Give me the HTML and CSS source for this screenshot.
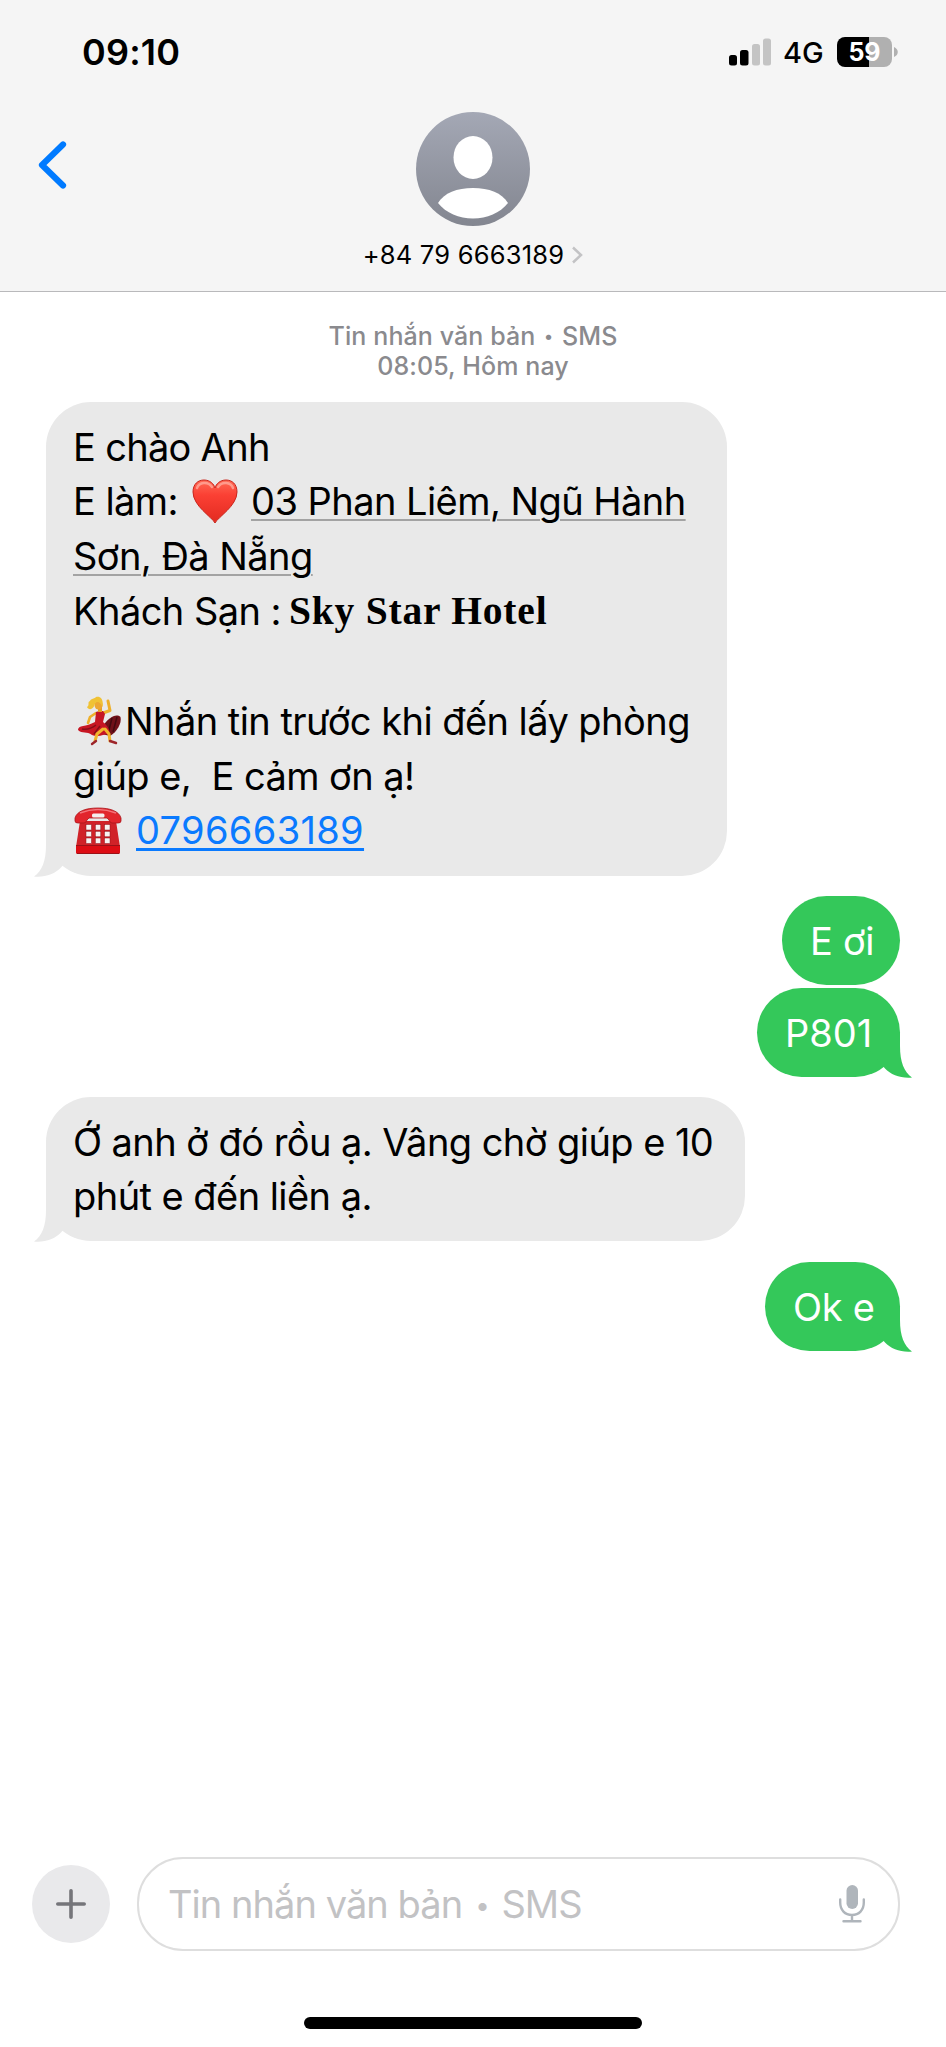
FILE: index.html
```html
<!DOCTYPE html>
<html lang="vi">
<head>
<meta charset="utf-8">
<title>Tin nhắn</title>
<link rel="stylesheet" href="styles.css">
</head>
<body>
<div class="phone">
  <header class="header">
    <div class="status">
      <span class="clock">09:10</span>
      <div class="status-right">
        <svg class="signal" width="42" height="28" viewBox="0 0 42 28"><rect x="0" y="17" width="8" height="10.500" rx="2.500"/><rect x="11" y="12" width="8.500" height="15.500" rx="2.500"/><rect x="23" y="6" width="8" height="21.500" rx="2.500" fill="#c4c4c4"/><rect x="34" y="0.500" width="8" height="27" rx="2.500" fill="#c4c4c4"/></svg>
        <span class="network">4G</span>
        <div class="battery"><span class="battery-level">59</span></div>
        <svg class="battery-nub" width="4" height="10" viewBox="0 0 4 10"><path d="M0 0C5 2 5 8 0 10Z" fill="#b0b0b0"/></svg>
      </div>
    </div>
    <div class="nav">
      <svg class="back" width="30" height="50" viewBox="0 0 30 50"><path d="M26 4.500L5 25L26 45.500" fill="none" stroke="#007aff" stroke-width="6.200" stroke-linecap="round" stroke-linejoin="round"/></svg>
      <div class="contact">
        <svg class="avatar" width="114" height="114" viewBox="0 0 114 114">
          <defs><linearGradient id="ag" x1="0" y1="0" x2="0" y2="1"><stop offset="0" stop-color="#a4a8b5"/><stop offset="1" stop-color="#838690"/></linearGradient></defs>
          <circle cx="57" cy="57" r="57" fill="url(#ag)"/>
          <ellipse cx="57" cy="45.500" rx="19.500" ry="21.500" fill="#fff"/>
          <path d="M22 91C28 81 41 76 57 76C73 76 86 81 92 91C84 101 71 106.500 57 106.500C43 106.500 30 101 22 91Z" fill="#fff"/>
        </svg>
        <div class="number"><span class="number-text">+84 79 6663189</span><svg width="12" height="18" viewBox="0 0 12 18"><path d="M2 1.500L10 9L2 16.500" fill="none" stroke="#c3c3c5" stroke-width="2.500"/></svg></div>
      </div>
    </div>
  </header>

  <main class="thread">
    <div class="stamp"><div>Tin nhắn văn bản <span class="dot">•</span> SMS</div><div>08:05, Hôm nay</div></div>

    <div class="bubble in first">
      <div class="line"><span class="greeting">E chào Anh</span></div>
      <div class="line"><span>E làm:</span><svg class="heart" width="46" height="46" viewBox="0 0 46 46"><defs><linearGradient id="hg" x1="0" y1="0" x2="0" y2="1"><stop offset="0" stop-color="#ff6a55"/><stop offset=".35" stop-color="#fb4034"/><stop offset="1" stop-color="#e22a20"/></linearGradient></defs><path d="M23 44C20 38 1 27 1 13C1 5 6 1 12 1C18 1 22 5 23 9C24 5 28 1 34 1C40 1 45 5 45 13C45 27 26 38 23 44Z" fill="url(#hg)" stroke="#c9251c" stroke-width="1"/><path d="M5 9C7 3 16 2 20 8M26 8C30 2 39 3 41 9" fill="none" stroke="#ffb4a6" stroke-width="2.500" stroke-linecap="round" opacity=".7"/></svg><span class="addr">03 Phan Liêm, Ngũ Hành</span></div>
      <div class="line"><span class="addr">Sơn, Đà Nẵng</span></div>
      <div class="line"><span>Khách Sạn :</span><b class="hotel">Sky Star Hotel</b></div>
      <div class="line"></div>
      <div class="line"><svg class="dancer" width="46" height="50" viewBox="0 0 46 50"><path d="M26 17L33 14.500L31 5" fill="none" stroke="#eeb02b" stroke-width="3" stroke-linecap="round" stroke-linejoin="round"/><path d="M19 17L13 21L11 27" fill="none" stroke="#eeb02b" stroke-width="2.600" stroke-linecap="round"/><path d="M26 30C31 22 39 17 43.500 21C45 27 40 36 33 40L25 38Z" fill="#701018"/><path d="M35 22L31 38M40 21L36 36" stroke="#430a10" stroke-width="1.500"/><path d="M19 16L22 15H26L28 18L26 26C31 30 34 36 32 38C26 38 22 42 15 39C10 35 5 38 1 34C1 29 9 31 18 26Z" fill="#c71623"/><path d="M19 29C14 33 10 34 5 33M23 30L17 38" fill="none" stroke="#850e18" stroke-width="1.500"/><path d="M26 33L20 38L18 45M28 33L32 38L33 45" fill="none" stroke="#f1b62d" stroke-width="3" stroke-linecap="round" stroke-linejoin="round"/><path d="M19 45L15 48M33 45L39 47" stroke="#9d242a" stroke-width="2.400" stroke-linecap="round"/><path d="M21 11H25V16H21Z" fill="#e59f26"/><ellipse cx="21.500" cy="9" rx="4" ry="4.500" fill="#eda733"/><path d="M10 11C13 9 10 6 13 5C14 2 18 3 19 1C23-.5 27 3 25.500 11C24 8 23 6 20 6C17 7 18 11 15 12.500C13 14 11 13 10 11Z" fill="#f0c235"/></svg><span>Nhắn tin trước khi đến lấy phòng</span></div>
      <div class="line"><span>giúp e, &nbsp;E cảm ơn ạ!</span></div>
      <div class="line"><svg class="tel" width="48" height="48" viewBox="0 0 48 48"><path d="M6 14H42L46 40V45Q46 47 44 47H4Q2 47 2 45V40Z" fill="#d02228"/><path d="M2 39H46V45Q46 47 44 47H4Q2 47 2 45Z" fill="#dd0d14"/><path d="M2 38.500H46M3 46.500H45" stroke="#9c1117" stroke-width="1.200"/><path d="M1 11C3 4 12 1 24 1C36 1 45 4 47 11V14Q47 16 44 16H38Q36 16 35 13L33 11H15L13 13Q12 16 10 16H4Q1 16 1 14Z" fill="#e2252c" stroke="#a9151b" stroke-width=".8"/><path d="M6 6Q24-1 42 6" fill="none" stroke="#f3737a" stroke-width="1.500"/><rect x="18" y="6.500" width="12.500" height="4" rx="1.500" fill="#f5eeee"/><g fill="#f7f3f2" stroke="#8e1118" stroke-width=".5"><rect x="12" y="17.500" width="5.500" height="5.500"/><rect x="21.300" y="17.500" width="5.500" height="5.500"/><rect x="30.500" y="17.500" width="5.500" height="5.500"/><rect x="12" y="24.300" width="5.500" height="5.500"/><rect x="21.300" y="24.300" width="5.500" height="5.500"/><rect x="30.500" y="24.300" width="5.500" height="5.500"/><rect x="12" y="31" width="5.500" height="5.500"/><rect x="21.300" y="31" width="5.500" height="5.500"/><rect x="30.500" y="31" width="5.500" height="5.500"/></g></svg><span class="tel-link">0796663189</span></div>
      <svg class="tail" width="44" height="46" viewBox="0 0 44 46"><path d="M12 0V14C12 30 8 40 0 45.500C11 46.500 21 43 27 36.500L44 16V0Z"/></svg>
    </div>

    <div class="bubble out b2"><div class="line"><span>E ơi</span></div></div>
    <div class="bubble out b3"><div class="line"><span class="room">P801</span></div>
      <svg class="tail" width="44" height="46" viewBox="0 0 44 46"><path d="M12 0V14C12 30 8 40 0 45.500C11 46.500 21 43 27 36.500L44 16V0Z"/></svg>
    </div>

    <div class="bubble in b4">
      <div class="line"><span>Ớ anh ở đó rồu ạ. Vâng chờ giúp e 10</span></div>
      <div class="line"><span>phút e đến liền ạ.</span></div>
      <svg class="tail" width="44" height="46" viewBox="0 0 44 46"><path d="M12 0V14C12 30 8 40 0 45.500C11 46.500 21 43 27 36.500L44 16V0Z"/></svg>
    </div>

    <div class="bubble out b5"><div class="line"><span>Ok e</span></div>
      <svg class="tail" width="44" height="46" viewBox="0 0 44 46"><path d="M12 0V14C12 30 8 40 0 45.500C11 46.500 21 43 27 36.500L44 16V0Z"/></svg>
    </div>
  </main>

  <footer class="composer">
    <div class="composer-row">
      <div class="plus"><svg width="30" height="30" viewBox="0 0 30 30"><path d="M15 1.800V28.200M1.800 15H28.200" stroke="#75757a" stroke-width="3.600" stroke-linecap="round"/></svg></div>
      <div class="field">
        <span class="placeholder">Tin nhắn văn bản <span class="dot">•</span> SMS</span>
        <svg width="26" height="38" viewBox="0 0 26 38"><rect x="7.500" y="0" width="11.500" height="24" rx="5.750" fill="#afb5bb"/><path d="M1.200 14.500V17.500C1.200 25 6 30 13 30S24.800 25 24.800 17.500V14.500M13 30V36M4.500 36.200H21.500" fill="none" stroke="#afb5bb" stroke-width="2.400" stroke-linecap="round"/></svg>
      </div>
    </div>
    <div class="home"></div>
  </footer>
</div>
</body>
</html>
```

FILE: styles.css
```css
* { box-sizing: border-box; }
body {
  margin: 0;
  background: #fff;
  color: #000;
  font-family: Inter, "Liberation Sans", sans-serif;
}
svg { display: block; flex: none; }

.phone { width: 946px; height: 2047px; display: flex; flex-direction: column; overflow: hidden; }

.header { height: 292px; background: #f5f5f5; border-bottom: 1px solid #b9b9bb; }
.status { height: 104px; padding: 0 48px 0 82px; display: flex; justify-content: space-between; align-items: center; }
.clock { font-size: 36px; font-weight: 600; letter-spacing: .2px; }
.status-right { display: flex; align-items: center; }
.network { margin: 0 12px; font-size: 29px; font-weight: 500; width: 42px; }
.battery {
  width: 55px; height: 30px; border-radius: 8px;
  background: linear-gradient(90deg, #000 32px, #b0b0b0 32px);
  display: flex; align-items: center; justify-content: center;
}
.battery-level { color: #fff; font-size: 25px; font-weight: 700; line-height: 30px; }
.battery-nub { margin-left: 2px; }

.nav { display: grid; grid-template-columns: 1fr auto 1fr; padding-top: 8px; }
.back { margin: 28px 0 0 37px; }
.contact { display: flex; flex-direction: column; align-items: center; }
.number { display: flex; align-items: center; gap: 7px; margin-top: 13px; font-size: 25.500px; line-height: 31px; letter-spacing: .2px; }

.thread { flex: 1; display: flex; flex-direction: column; align-items: flex-start; padding: 29px 46px 0; }
.stamp { align-self: stretch; text-align: center; color: #8a8a8e; font-size: 25px; font-weight: 500; line-height: 30px; letter-spacing: .1px; }
.dot { display: inline-block; width: .52em; line-height: 1; transform: scale(.68); }

.bubble { position: relative; isolation: isolate; border-radius: 45px; padding: 17.500px 27px 17px; font-size: 38px; letter-spacing: -.55px; flex: none; }
.line { height: 54.850px; line-height: 54.850px; display: flex; align-items: center; white-space: pre; }
.in { background: #e9e9e9; fill: #e9e9e9; }
.out { background: #34c85a; fill: #34c85a; color: #fff; align-self: flex-end; letter-spacing: -.3px; padding-top: 18px; padding-left: 28px; }
.tail { position: absolute; z-index: -1; bottom: -.5px; left: -12px; }
.out .tail { left: auto; right: -12px; transform: scaleX(-1); }
.first { width: 681px; height: 474px; margin-top: 21px; }
.b2 { width: 118px; height: 89px; margin-top: 20px; }
.b3 { width: 143px; height: 89px; margin-top: 3px; }
.b4 { width: 699px; height: 144px; margin-top: 20px; }
.b5 { width: 135px; height: 89px; margin-top: 21px; }

.greeting { letter-spacing: -.7px; }
.room { letter-spacing: 0; }
.heart { margin: 0 13px 0 14px; }
.dancer { margin: 0 2px 0 4px; }
.tel { margin: 0 14px 0 1px; }
.addr { text-decoration: underline; text-decoration-color: #a3a3a3; text-decoration-thickness: 2px; text-underline-offset: 4px; }
.hotel { font-family: "Liberation Serif", serif; font-size: 39.500px; margin-left: 8px; letter-spacing: .8px; }
.tel-link { color: #0a7aff; text-decoration: underline; text-decoration-thickness: 2.500px; text-underline-offset: 4px; letter-spacing: .34px; }

.composer { height: 190px; padding: 0 46px 0 32px; }
.composer-row { display: flex; align-items: center; gap: 27px; height: 94px; }
.plus { width: 78px; height: 78px; border-radius: 50%; background: #e9e9eb; display: flex; align-items: center; justify-content: center; }
.field { flex: 1; height: 94px; border: 2px solid #dedede; border-radius: 46px; display: flex; align-items: center; justify-content: space-between; padding: 0 33px 0 29px; }
.placeholder { color: #c2c2c4; font-size: 38px; letter-spacing: -.95px; }
.home { width: 338px; height: 12px; margin: 66px 0 0 272px; border-radius: 6px; background: #000; }
```
